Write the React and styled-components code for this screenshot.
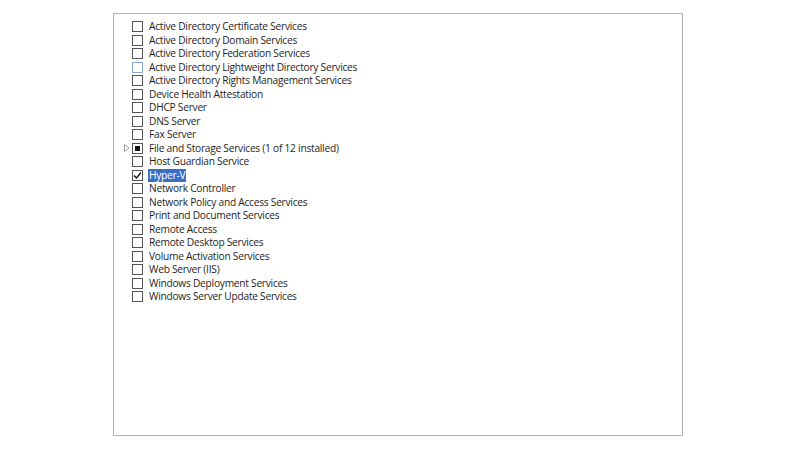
import React from "react";
import styled, { createGlobalStyle } from "styled-components";

const Global = createGlobalStyle`
  html, body {
    margin: 0;
    padding: 0;
    background: #fff;
  }
`;

const Page = styled.div`
  width: 800px;
  height: 450px;
  padding: 13px 0 0 113px;
  box-sizing: border-box;
  font-family: "Open Sans", "Noto Sans", sans-serif;
  font-size: 10.2px;
  letter-spacing: -0.25px;
  color: #1e1e1e;
`;

const Panel = styled.div`
  width: 570px;
  height: 423px;
  box-sizing: border-box;
  border: 1px solid #b4b4b4;
  padding: 6px 0 0 7px;
`;

const List = styled.ul`
  list-style: none;
  margin: 0;
  padding: 0;
`;

const Row = styled.li`
  display: flex;
  align-items: center;
  height: 13.5px;
`;

const Expander = styled.span`
  width: 11px;
  display: flex;
  justify-content: center;
`;

const Box = styled.span`
  width: 9px;
  height: 9px;
  border: 1px solid ${(p) => (p.$hover ? "#86a9d8" : "#555")};
  background: #fff;
  margin-right: 5px;
  display: flex;
  align-items: center;
  justify-content: center;
  flex: none;
`;

const Fill = styled.span`
  width: 5px;
  height: 5px;
  background: #111;
`;

const Label = styled.span`
  line-height: 13px;
  padding: 0 1px;
  white-space: nowrap;
  background: ${(p) => (p.$selected ? "#3a6fc4" : "transparent")};
  color: ${(p) => (p.$selected ? "#fff" : "inherit")};
`;

const items = [
  { name: "Active Directory Certificate Services" },
  { name: "Active Directory Domain Services" },
  { name: "Active Directory Federation Services" },
  { name: "Active Directory Lightweight Directory Services", hover: true },
  { name: "Active Directory Rights Management Services" },
  { name: "Device Health Attestation" },
  { name: "DHCP Server" },
  { name: "DNS Server" },
  { name: "Fax Server" },
  { name: "File and Storage Services (1 of 12 installed)", partial: true, expand: true },
  { name: "Host Guardian Service" },
  { name: "Hyper-V", checked: true, selected: true },
  { name: "Network Controller" },
  { name: "Network Policy and Access Services" },
  { name: "Print and Document Services" },
  { name: "Remote Access" },
  { name: "Remote Desktop Services" },
  { name: "Volume Activation Services" },
  { name: "Web Server (IIS)" },
  { name: "Windows Deployment Services" },
  { name: "Windows Server Update Services" },
];

const Arrow = () => (
  <svg width="6" height="8" viewBox="0 0 6 8">
    <path d="M0.5 0.5 L5 4 L0.5 7.5 Z" fill="none" stroke="#9a9a9a" />
  </svg>
);

const Check = () => (
  <svg width="9" height="9" viewBox="0 0 9 9">
    <path d="M1 4.5 L3.5 7 L8 1.5" fill="none" stroke="#111" strokeWidth="1.4" />
  </svg>
);

export default function App() {
  return (
    <Page>
      <Global />
      <Panel>
        <List>
          {items.map((it) => (
            <Row key={it.name}>
              <Expander>{it.expand && <Arrow />}</Expander>
              <Box $hover={it.hover}>
                {it.partial && <Fill />}
                {it.checked && <Check />}
              </Box>
              <Label $selected={it.selected}>{it.name}</Label>
            </Row>
          ))}
        </List>
      </Panel>
    </Page>
  );
}
